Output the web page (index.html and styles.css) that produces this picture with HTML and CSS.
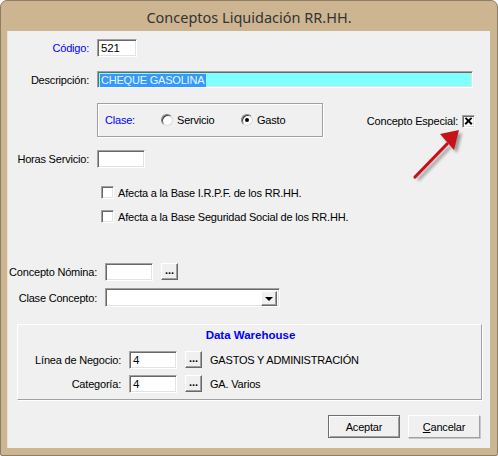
FILE: index.html
```html
<!DOCTYPE html>
<html lang="es">
<head>
<meta charset="utf-8">
<title>Conceptos Liquidación RR.HH.</title>
<link rel="stylesheet" href="styles.css">
</head>
<body>
<div class="window">
  <div class="titlebar">Conceptos Liquidación RR.HH.</div>
  <div class="client">

    <div class="row row-codigo">
      <label class="lbl lbl-80 blue">Código:</label>
      <div class="field w-40">521</div>
    </div>

    <div class="row row-desc">
      <label class="lbl lbl-80">Descripción:</label>
      <div class="field field-desc"><span class="sel">CHEQUE GASOLINA</span></div>
    </div>

    <div class="row row-clase">
      <div class="groupbox clase-box">
        <span class="blue clase-lbl">Clase:</span>
        <span class="radio"></span><span class="radio-text">Servicio</span>
        <span class="radio checked"></span><span class="radio-text">Gasto</span>
      </div>
      <div class="especial">
        <span>Concepto Especial:</span>
        <span class="check x"></span>
      </div>
    </div>

    <div class="row row-horas">
      <label class="lbl lbl-80">Horas Servicio:</label>
      <div class="field w-48"></div>
    </div>

    <div class="row row-chk1">
      <span class="check"></span><span class="chk-text">Afecta a la Base I.R.P.F. de los RR.HH.</span>
    </div>

    <div class="row row-chk2">
      <span class="check"></span><span class="chk-text">Afecta a la Base Seguridad Social de los RR.HH.</span>
    </div>

    <div class="row row-nomina">
      <label class="lbl lbl-88">Concepto Nómina:</label>
      <div class="field w-48"></div>
      <button class="dots">...</button>
    </div>

    <div class="row row-claseconc">
      <label class="lbl lbl-88">Clase Concepto:</label>
      <div class="combo">
        <span class="combo-btn"><span class="tri"></span></span>
      </div>
    </div>

    <div class="dw">
      <div class="dw-title">Data Warehouse</div>
      <div class="row dw-row dw-row1">
        <label class="lbl lbl-104">Línea de Negocio:</label>
        <div class="field w-48">4</div>
        <button class="dots">...</button>
        <span class="dw-desc">GASTOS Y ADMINISTRACIÓN</span>
      </div>
      <div class="row dw-row dw-row2">
        <label class="lbl lbl-104">Categoría:</label>
        <div class="field w-48">4</div>
        <button class="dots">...</button>
        <span class="dw-desc">GA. Varios</span>
      </div>
    </div>

    <div class="actions">
      <button class="btn btn-default">Aceptar</button>
      <button class="btn"><u>C</u>ancelar</button>
    </div>

    <!-- callout arrow pointing at the checkbox -->
    <svg class="callout" width="70" height="70" viewBox="0 0 70 70">
      <defs>
        <filter id="shadow" x="-30%" y="-30%" width="160%" height="160%">
          <feGaussianBlur stdDeviation="1.6"/>
        </filter>
      </defs>
      <g transform="translate(3,3)" fill="#7a7a7a" stroke="#7a7a7a" filter="url(#shadow)" opacity="0.7">
        <line x1="8" y1="55" x2="40" y2="22" stroke-width="3.2"/>
        <polygon points="52,8 33,12 47,28" stroke="none"/>
      </g>
      <g fill="#c8121a" stroke="#c8121a">
        <line x1="8" y1="55" x2="40" y2="22" stroke-width="3.2" stroke-linecap="round"/>
        <polygon points="52,8 33,12 47,28" stroke="none"/>
      </g>
    </svg>
  </div>
</div>
</body>
</html>
```

FILE: styles.css
```css
* { box-sizing: border-box; }

html, body {
  margin: 0;
  padding: 0;
  background: #ffffff;
}

body {
  width: 498px;
  height: 456px;
  font-family: "Liberation Sans", Arial, sans-serif;
  font-size: 11px;
  letter-spacing: -0.2px;
  color: #000;
}

.window {
  width: 498px;
  height: 456px;
  display: flex;
  flex-direction: column;
  background: #cdb592;
  border: 1px solid #8d7d68;
  border-radius: 7px 7px 2px 2px;
  padding: 0 7px 7px 7px;
}

.titlebar {
  height: 30px;
  flex: none;
  display: flex;
  align-items: center;
  justify-content: center;
  padding-top: 1px;
  font-family: "Noto Sans", "Open Sans", sans-serif;
  font-size: 14.5px;
  letter-spacing: 0;
  color: #333333;
}

.client {
  position: relative;
  flex: 1;
  background: #f0f0f0;
  border-left: 1px solid #e8e3da;
  margin-left: -1px;
  padding-left: 1px;
}

.blue { color: #0000ff; }

.row {
  display: flex;
  align-items: center;
}

.lbl {
  flex: none;
  text-align: right;
  padding-right: 8px;
  white-space: nowrap;
}
.lbl-80 { width: 88px; }
.lbl-88 { width: 96px; }
.lbl-104 { width: 112px; }

/* sunken edit box */
.field {
  flex: none;
  height: 18px;
  background: #ffffff;
  border-top: 1px solid #a0a0a0;
  border-left: 1px solid #a0a0a0;
  border-right: 1px solid #ffffff;
  border-bottom: 1px solid #ffffff;
  box-shadow: inset 1px 1px 0 #696969, inset -1px -1px 0 #e3e3e3;
  padding: 2px 0 0 3px;
  line-height: 13px;
  font-size: 11.5px;
}
.w-40 { width: 40px; }
.w-48 { width: 48px; }

.row-codigo { margin-top: 8px; }
.row-desc { margin-top: 14px; }

.field-desc {
  width: 376px;
  height: 17px;
  background: #80ffff;
  padding: 2px 0 0 2px;
  font-size: 11px;
}
.sel {
  display: inline-block;
  background: #3399ff;
  color: #eaf6ff;
  padding: 0 2px 0 1px;
  line-height: 13px;
}

.row-clase {
  margin-top: 15px;
  height: 34px;
  padding-left: 88px;
}

.groupbox {
  border: 1px solid #a0a0a0;
  box-shadow: inset 1px 1px 0 #ffffff, 1px 1px 0 #ffffff;
}

.clase-box {
  flex: none;
  width: 226px;
  height: 34px;
  display: flex;
  align-items: center;
  padding-left: 7px;
}
.clase-lbl { width: 56px; }

.radio {
  flex: none;
  width: 12px;
  height: 12px;
  border-radius: 50%;
  background: #fff;
  border: 1px solid;
  border-color: #808080 #dcdcdc #dcdcdc #808080;
  box-shadow: inset 1px 1px 0 #404040;
  position: relative;
}
.radio.checked::after {
  content: "";
  position: absolute;
  left: 3px;
  top: 3px;
  width: 4px;
  height: 4px;
  border-radius: 50%;
  background: #000;
}
.radio-text {
  padding-left: 4px;
  width: 68px;
}

.especial {
  flex: none;
  width: 152px;
  display: flex;
  align-items: center;
  justify-content: flex-end;
  margin-top: 2px;
}
.especial .check { margin-left: 4px; }

.check {
  flex: none;
  width: 13px;
  height: 13px;
  background: #fff;
  border-top: 1px solid #a0a0a0;
  border-left: 1px solid #a0a0a0;
  border-right: 1px solid #ffffff;
  border-bottom: 1px solid #ffffff;
  box-shadow: inset 1px 1px 0 #696969, inset -1px -1px 0 #e3e3e3;
  position: relative;
}
.check.x::before,
.check.x::after {
  content: "";
  position: absolute;
  left: 1px;
  top: 4px;
  width: 9px;
  height: 2.4px;
  background: #000;
  transform: rotate(45deg);
}
.check.x::after { transform: rotate(-45deg); }

.row-horas { margin-top: 13px; }

.row-chk1 { margin-top: 18px; padding-left: 92px; }
.row-chk2 { margin-top: 11px; padding-left: 92px; }
.chk-text { padding-left: 4px; }

.row-nomina { margin-top: 40px; }

.dots {
  flex: none;
  width: 17px;
  height: 17px;
  margin: -1px 0 0 8px;
  padding: 0 0 4px 0;
  background: #f0f0f0;
  border-top: 1px solid #ffffff;
  border-left: 1px solid #ffffff;
  border-right: 1px solid #696969;
  border-bottom: 1px solid #696969;
  box-shadow: inset -1px -1px 0 #a0a0a0;
  font-family: "Liberation Sans", Arial, sans-serif;
  font-size: 11px;
  font-weight: bold;
  letter-spacing: 0;
  line-height: 8px;
  color: #000;
}

.row-claseconc { margin-top: 7px; }

.combo {
  flex: none;
  width: 175px;
  height: 19px;
  background: #fff;
  border-top: 1px solid #a0a0a0;
  border-left: 1px solid #a0a0a0;
  border-right: 1px solid #ffffff;
  border-bottom: 1px solid #ffffff;
  box-shadow: inset 1px 1px 0 #696969, inset -1px -1px 0 #e3e3e3;
  display: flex;
  justify-content: flex-end;
  padding: 2px 2px 2px 0;
}
.combo-btn {
  width: 16px;
  height: 15px;
  background: #f0f0f0;
  border-top: 1px solid #ffffff;
  border-left: 1px solid #ffffff;
  border-right: 1px solid #696969;
  border-bottom: 1px solid #696969;
  box-shadow: inset -1px -1px 0 #a0a0a0;
  display: flex;
  align-items: center;
  justify-content: center;
}
.tri {
  width: 0;
  height: 0;
  border-left: 4px solid transparent;
  border-right: 4px solid transparent;
  border-top: 4px solid #000;
  margin-top: 1px;
}

.dw {
  margin: 17px 0 0 8px;
  width: 465px;
  height: 76px;
  border-top: 1px solid #ffffff;
  border-left: 1px solid #ffffff;
  border-right: 1px solid #a0a0a0;
  border-bottom: 1px solid #a0a0a0;
  box-shadow: 1px 1px 0 #ffffff;
}
.dw-title {
  text-align: center;
  font-weight: bold;
  color: #0000ff;
  font-size: 11.5px;
  letter-spacing: 0;
  line-height: 14px;
  margin-top: 3px;
  padding-left: 2px;
}
.dw-row1 { margin-top: 9px; }
.dw-row2 { margin-top: 6px; }
.dw-desc { padding-left: 8px; }
.dw .lbl-104 { width: 111px; }

.actions {
  display: flex;
  justify-content: flex-end;
  gap: 8px;
  margin-top: 15px;
  padding-right: 10px;
}

.btn {
  width: 72px;
  height: 23px;
  padding: 0;
  background: #f0f0f0;
  border-top: 1px solid #ffffff;
  border-left: 1px solid #ffffff;
  border-right: 1px solid #a0a0a0;
  border-bottom: 1px solid #a0a0a0;
  box-shadow: 1px 1px 0 #c8c8c8;
  font-family: "Liberation Sans", Arial, sans-serif;
  font-size: 11px;
  letter-spacing: -0.2px;
  color: #000;
}
.btn-default {
  border: 1px solid #6e6e6e;
  box-shadow: inset 1px 1px 0 #ffffff, inset -1px -1px 0 #a0a0a0;
}
.btn u { text-decoration: underline; }

.callout {
  position: absolute;
  left: 399px;
  top: 91px;
  pointer-events: none;
}
```
